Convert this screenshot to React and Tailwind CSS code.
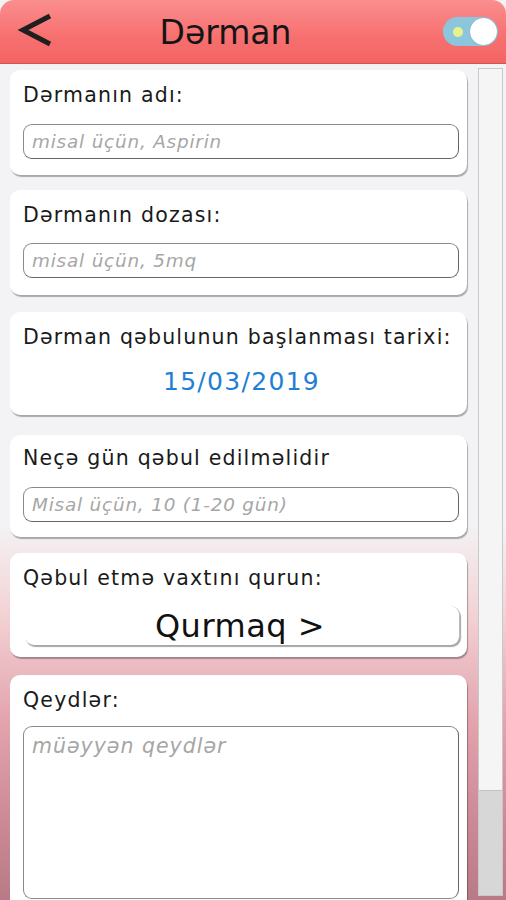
import React from "react";

const font = { fontFamily: '"DejaVu Sans", "Noto Sans", sans-serif' };

function Card({ className = "", children }) {
  return (
    <div
      className={`bg-white rounded-[10px] shadow-[1px_2px_1px_rgba(0,0,0,0.3)] px-[13px] ${className}`}
    >
      {children}
    </div>
  );
}

function Label({ children }) {
  return (
    <div className="text-[20.5px] leading-[24px] tracking-[1.2px] whitespace-nowrap">
      {children}
    </div>
  );
}

function Field({ placeholder, className = "" }) {
  return (
    <div
      className={`h-[35px] -mr-[5px] rounded-[9px] border border-[#8a8a8a] border-r-[#666] border-b-[#666] flex items-center px-[8px] text-[18.4px] tracking-[0.8px] italic text-[#a6a6a6] whitespace-nowrap ${className}`}
    >
      {placeholder}
    </div>
  );
}

export default function App() {
  return (
    <div
      className="w-[506px] h-[900px] overflow-hidden flex flex-col bg-[linear-gradient(180deg,#f3f3f5_0%,#f3f3f5_58%,#f3d3d6_68%,#e3a4ae_80%,#c98894_92%,#b97a88_100%)]"
      style={font}
    >
      {/* header */}
      <div className="h-[64px] shrink-0 rounded-t-[14px] bg-[linear-gradient(180deg,#fb8e8e_0%,#f76f6f_60%,#f46464_100%)] border-b border-[#c55] flex items-center relative">
        <svg width="40" height="40" viewBox="0 0 40 40" className="ml-[16px]">
          <polyline
            points="34,4 7,18 34,32"
            fill="none"
            stroke="#1f1f1f"
            strokeWidth="5"
          />
        </svg>
        <div className="flex-1 text-center text-[33px] text-[#151515] pr-[111px] pt-[2px]">
          Dərman
        </div>
        <div className="absolute right-[8px] top-[17px] w-[55px] h-[29px] rounded-full bg-[#8cc6dd] flex items-center justify-between px-[1px]">
          <div className="w-[10px] h-[10px] rounded-full bg-[#e6f28a] ml-[9px]" />
          <div className="w-[27px] h-[27px] rounded-full bg-white shadow-[0_0_1px_rgba(0,0,0,0.3)]" />
        </div>
      </div>

      {/* body */}
      <div className="flex flex-1 min-h-0">
        <div className="w-[457px] ml-[10px] flex flex-col text-[#1a1a1a]">
          <Card className="mt-[6px] h-[105px] pt-[13px]">
            <Label>Dərmanın adı:</Label>
            <Field placeholder="misal üçün, Aspirin" className="mt-[17px]" />
          </Card>

          <Card className="mt-[15px] h-[105px] pt-[13px]">
            <Label>Dərmanın dozası:</Label>
            <Field placeholder="misal üçün, 5mq" className="mt-[16px]" />
          </Card>

          <Card className="mt-[17px] h-[103px] pt-[13px]">
            <Label>Dərman qəbulunun başlanması tarixi:</Label>
            <div className="text-center text-[25px] text-[#1f7fd6] mt-[14px] tracking-[1.3px] pl-[6px]">
              15/03/2019
            </div>
          </Card>

          <Card className="mt-[20px] h-[102px] pt-[11px]">
            <Label>Neçə gün qəbul edilməlidir</Label>
            <Field placeholder="Misal üçün, 10 (1-20 gün)" className="mt-[17px]" />
          </Card>

          <Card className="mt-[16px] h-[104px] pt-[13px]">
            <Label>Qəbul etmə vaxtını qurun:</Label>
            <div className="mt-[16px] ml-[2px] -mr-[6px] h-[39px] rounded-[9px] bg-white shadow-[1px_2px_1px_rgba(0,0,0,0.35)] border-r border-[#bbb] flex items-center justify-center text-[32px] tracking-[0.5px] text-[#111] pr-[4px]">
              Qurmaq &gt;
            </div>
          </Card>

          <Card className="mt-[18px] flex-1 pt-[13px] rounded-b-none pb-0 flex flex-col">
            <Label>Qeydlər:</Label>
            <div className="mt-[14px] -mr-[5px] flex-1 mb-[1px] rounded-[9px] border border-[#8a8a8a] border-r-[#666] px-[8px] pt-[4px] text-[20.5px] tracking-[1px] italic text-[#a6a6a6]">
              müəyyən qeydlər
            </div>
          </Card>
        </div>

        {/* scrollbar */}
        <div className="ml-[11px] mt-[4px] mb-[4px] w-[25px] border border-[#c9c9c9] bg-[#f5f5f5] flex flex-col">
          <div className="flex-1" />
          <div className="h-[105px] bg-[#d7d7d7] border-t border-[#c4c4c4]" />
        </div>
      </div>
    </div>
  );
}
